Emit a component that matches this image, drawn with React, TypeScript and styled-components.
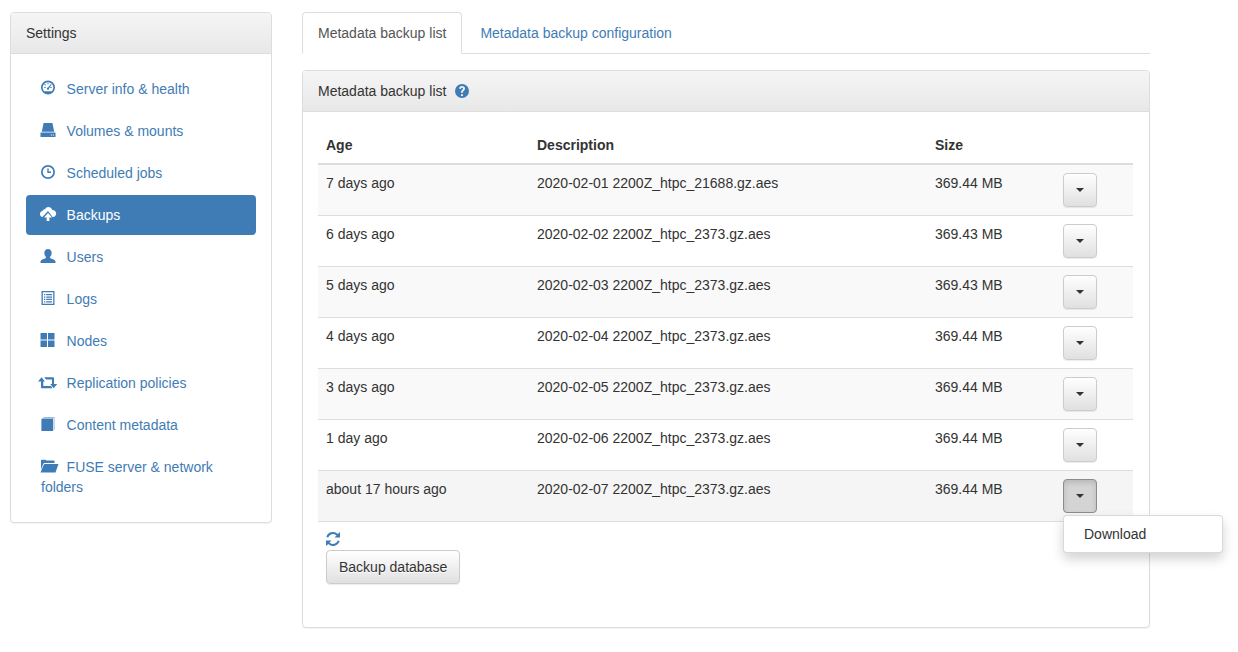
import React from "react";
import styled, { createGlobalStyle } from "styled-components";

const GlobalStyle = createGlobalStyle`
  html, body {
    margin: 0;
    padding: 0;
    background: #fff;
    color: #333;
    font-family: "Liberation Sans", Arial, sans-serif;
    font-size: 14px;
    line-height: 20px;
  }
`;

const linkBlue = "#3f7cb5";

const Page = styled.div`
  display: flex;
  align-items: flex-start;
  gap: 30px;
  padding: 12px 88px 24px 10px;
`;

const Panel = styled.section`
  border: 1px solid #ddd;
  border-radius: 4px;
  background: #fff;
  box-shadow: 0 1px 1px rgba(0, 0, 0, 0.05);
`;

const Sidebar = styled(Panel)`
  flex: 0 0 262px;
  box-sizing: border-box;
`;

const PanelHeading = styled.div`
  display: flex;
  align-items: center;
  gap: 9px;
  height: 41px;
  box-sizing: border-box;
  padding: 10px 15px;
  border-bottom: 1px solid #ddd;
  border-radius: 3px 3px 0 0;
  background: linear-gradient(to bottom, #f5f5f5, #e8e8e8);
`;

const SidebarBody = styled.div`
  padding: 15px;
`;

const Nav = styled.ul`
  list-style: none;
  margin: 0;
  padding: 0;
  display: flex;
  flex-direction: column;
  gap: 2px;
`;

const NavLink = styled.a<{ $active?: boolean }>`
  display: block;
  padding: 10px 15px;
  border-radius: 4px;
  color: ${(p) => (p.$active ? "#fff" : linkBlue)};
  background: ${(p) => (p.$active ? linkBlue : "transparent")};
  text-decoration: none;
`;

const NavIcon = styled.svg`
  display: inline-block;
  width: 14px;
  height: 14px;
  margin-right: 11.6px;
  vertical-align: -1px;
  overflow: visible;
  fill: currentColor;
`;

const Main = styled.main`
  flex: 1;
  min-width: 0;
`;

const Tabs = styled.div`
  display: flex;
  height: 42px;
  box-sizing: border-box;
  border-bottom: 1px solid #ddd;
  margin-bottom: 16px;
`;

const Tab = styled.a<{ $active?: boolean }>`
  height: 42px;
  box-sizing: border-box;
  padding: 10px 15px;
  margin-right: 2px;
  border: 1px solid ${(p) => (p.$active ? "#ddd" : "transparent")};
  border-bottom-color: ${(p) => (p.$active ? "#fff" : "transparent")};
  border-radius: 4px 4px 0 0;
  background: ${(p) => (p.$active ? "#fff" : "transparent")};
  color: ${(p) => (p.$active ? "#555" : linkBlue)};
  text-decoration: none;
`;

const ContentBody = styled.div`
  padding: 15px 16px 43px 15px;
`;

const HelpIcon = styled.svg`
  width: 14px;
  height: 14px;
  fill: ${linkBlue};
`;

const Table = styled.table`
  width: 815px;
  table-layout: fixed;
  border-collapse: collapse;
  border-spacing: 0;
`;

const Th = styled.th<{ $width: number }>`
  box-sizing: border-box;
  width: ${(p) => p.$width}px;
  padding: 8px;
  text-align: left;
  font-weight: 700;
  border-bottom: 2px solid #ddd;
`;

const Row = styled.tr<{ $hover?: boolean; $odd?: boolean }>`
  background: ${(p) => (p.$hover ? "#f5f5f5" : p.$odd ? "#f9f9f9" : "#fff")};
  border-bottom: 1px solid #ddd;
`;

const Td = styled.td`
  padding: 8px;
  vertical-align: top;
`;

const ActionCell = styled(Td)`
  position: relative;
`;

const Button = styled.button`
  display: inline-block;
  box-sizing: border-box;
  padding: 6px 12px;
  font: inherit;
  color: #333;
  border: 1px solid #ccc;
  border-radius: 4px;
  background: linear-gradient(to bottom, #fff, #e0e0e0);
  box-shadow: inset 0 1px 0 rgba(255, 255, 255, 0.15), 0 1px 1px rgba(0, 0, 0, 0.075);
  text-shadow: 0 1px 0 #fff;
`;

const CaretButton = styled(Button)<{ $open?: boolean }>`
  width: 34px;
  height: 34px;
  padding: 0;
  display: flex;
  align-items: center;
  justify-content: center;
  ${(p) =>
    p.$open
      ? `
    background: #d4d4d4;
    border-color: #8c8c8c;
    box-shadow: inset 0 3px 5px rgba(0, 0, 0, 0.125);
  `
      : ""}
`;

const Caret = styled.span`
  width: 0;
  height: 0;
  border-top: 4px solid #333;
  border-left: 4px solid transparent;
  border-right: 4px solid transparent;
`;

const Menu = styled.ul`
  position: absolute;
  top: 44px;
  left: 8px;
  z-index: 10;
  width: 160px;
  box-sizing: border-box;
  margin: 0;
  padding: 5px 0;
  list-style: none;
  background: #fff;
  border: 1px solid rgba(0, 0, 0, 0.15);
  border-radius: 4px;
  box-shadow: 0 6px 12px rgba(0, 0, 0, 0.175);
`;

const MenuItem = styled.li`
  padding: 3px 20px;
  color: #333;
`;

const RefreshIcon = styled.svg`
  display: block;
  width: 14px;
  height: 14px;
  margin: 10px 0 4px 8px;
  fill: ${linkBlue};
`;

const BackupButton = styled(Button)`
  margin-left: 8px;
`;

const icons: Record<string, React.ReactNode> = {
  dashboard: (
    <path
      fillRule="evenodd"
      d="M7 -.5a7 7 0 1 1 0 14A7 7 0 0 1 7 -.5Zm0 1.700a5.300 5.300 0 0 0-5.300 5.300c0 1.400.6 2.700 1.500 3.700h7.600c.9-1 1.500-2.300 1.500-3.700A5.300 5.300 0 0 0 7 1.200Zm-.5.700h1v1.400h-1ZM3.300 6h1.400v1H3.300Zm6 0h1.400v1H9.300Zm.6-3 .7.5L8 7.400a1.100 1.100 0 1 1-1-.8ZM3.900 3l1 1-.7.7-1-1Z"
    />
  ),
  hdd: (
    <path
      fillRule="evenodd"
      d="M2.600 0h8.800l1.800 8.700H.8ZM-.2 9.500h14.400c.2 0 .3.100.3.300v4c0 .1-.1.200-.3.200H-.2c-.2 0-.3-.1-.3-.2v-4c0-.2.100-.3.300-.3Zm10 1.900v1h1.100v-1Zm2 0v1h1.100v-1Z"
    />
  ),
  time: (
    <path
      fillRule="evenodd"
      d="M7 0a7 7 0 1 1 0 14A7 7 0 0 1 7 0Zm0 1.700a5.300 5.300 0 1 0 0 10.600A5.300 5.300 0 0 0 7 1.700ZM6.300 3.500h1.400v3.100H10V8H6.300Z"
    />
  ),
  cloud: (
    <path d="M7.200 0c1.900 0 3.500 1.200 4.100 2.900 2.100 0 3.900 1.600 3.900 3.600 0 1.900-1.500 3.400-3.300 3.400h-.3L7 4 1.400 9.900H1C-.2 9.600-1 8.500-1 7c0-1.500 1.100-2.700 2.500-2.900C2 2.900 3 2.200 4.100 2.300 4.800.9 5.900 0 7.200 0ZM7 6l4 4.400H8.400V14H5.600v-3.600H3Z" />
  ),
  user: (
    <path d="M7 0c2.300 0 3.700 1.700 3.700 4 0 1.600-.7 3-1.700 3.900 0 .9.200 1.300 1 1.600 2 .7 4.200 1.200 4.500 3.100V14H-.5v-1.400c.3-1.900 2.500-2.400 4.500-3.100.8-.3 1-.7 1-1.600C4 7 3.300 5.600 3.300 4 3.300 1.700 4.700 0 7 0Z" />
  ),
  list: (
    <path
      fillRule="evenodd"
      d="M.5 0h13v14H.5Zm1.300 1.300v11.400h10.400V1.300ZM3 3h1.300v1.300H3Zm2.200 0H11v1.300H5.200ZM3 5.400h1.300v1.300H3Zm2.200 0H11v1.300H5.200ZM3 7.800h1.300v1.300H3Zm2.200 0H11v1.300H5.200Zm-2.200 2.400h1.300v1.300H3Zm2.200 0H11v1.300H5.200Z"
    />
  ),
  grid: <path d="M-.5 0h6.500v6.500H-.5Zm7.500 0h6.500v6.500H7ZM-.5 7.500h6.500V14H-.5Zm7.500 0h6.500V14H7Z" />,
  retweet: (
    <path d="M.5 2.300 4 6.500H2.300V11H10l1.500 2.300H1c-.7 0-1-.3-1-1V6.500H-3ZM3.200 2.300h8.600c.8 0 1.200.4 1.200 1.200V9h3.200l-3.500 4.300L9.200 9H11V4.500H5Z" />
  ),
  book: (
    <>
      <path d="M1.800 1.500h10.300V14H.4V2.900c0-.8.600-1.400 1.400-1.400Z" />
      <path d="M2.500.1h11.100V13h-.9V1H2.500Z" fillOpacity={0.5} />
    </>
  ),
  folder: (
    <path d="M0 1.700c0-.6.400-1 1-1h3.300c.5 0 .8.200 1 .8h7.400c.5 0 .8.300.8.800V4H3.700c-.7 0-1.200.4-1.500 1.100L0 10.500ZM4 5h13.500l-3 8.500H-.5l3-7.300C2.800 5.400 3.300 5 4 5Z" />
  ),
};

const links = [
  { label: "Server info & health", icon: "dashboard" },
  { label: "Volumes & mounts", icon: "hdd" },
  { label: "Scheduled jobs", icon: "time" },
  { label: "Backups", icon: "cloud", active: true },
  { label: "Users", icon: "user" },
  { label: "Logs", icon: "list" },
  { label: "Nodes", icon: "grid" },
  { label: "Replication policies", icon: "retweet" },
  { label: "Content metadata", icon: "book" },
  { label: "FUSE server & network folders", icon: "folder" },
];

const backups = [
  { age: "7 days ago", name: "2020-02-01 2200Z_htpc_21688.gz.aes", size: "369.44 MB" },
  { age: "6 days ago", name: "2020-02-02 2200Z_htpc_2373.gz.aes", size: "369.43 MB" },
  { age: "5 days ago", name: "2020-02-03 2200Z_htpc_2373.gz.aes", size: "369.43 MB" },
  { age: "4 days ago", name: "2020-02-04 2200Z_htpc_2373.gz.aes", size: "369.44 MB" },
  { age: "3 days ago", name: "2020-02-05 2200Z_htpc_2373.gz.aes", size: "369.44 MB" },
  { age: "1 day ago", name: "2020-02-06 2200Z_htpc_2373.gz.aes", size: "369.44 MB" },
  { age: "about 17 hours ago", name: "2020-02-07 2200Z_htpc_2373.gz.aes", size: "369.44 MB" },
];

export default function App() {
  return (
    <>
      <GlobalStyle />
      <Page>
        <Sidebar>
          <PanelHeading>Settings</PanelHeading>
          <SidebarBody>
            <Nav>
              {links.map((link) => (
                <li key={link.label}>
                  <NavLink $active={link.active}>
                    <NavIcon viewBox="0 0 14 14">{icons[link.icon]}</NavIcon>
                    {link.label}
                  </NavLink>
                </li>
              ))}
            </Nav>
          </SidebarBody>
        </Sidebar>
        <Main>
          <Tabs>
            <Tab $active>Metadata backup list</Tab>
            <Tab>Metadata backup configuration</Tab>
          </Tabs>
          <Panel>
            <PanelHeading>
              Metadata backup list
              <HelpIcon viewBox="0 0 14 14">
                <path
                  fillRule="evenodd"
                  d="M7 0a7 7 0 1 1 0 14A7 7 0 0 1 7 0Zm-1 10.200v1.800h2v-1.800ZM7 2C5.300 2 4.200 3 4 4.600l1.900.3c.1-.8.500-1.200 1.100-1.200.6 0 1 .4 1 .9 0 .5-.3.800-.9 1.300-.8.600-1.100 1.200-1.100 2.200v.6h1.900v-.4c0-.6.200-.9.800-1.300.9-.7 1.300-1.400 1.300-2.400C10 3 8.800 2 7 2Z"
                />
              </HelpIcon>
            </PanelHeading>
            <ContentBody>
              <Table>
                <thead>
                  <tr>
                    <Th $width={211}>Age</Th>
                    <Th $width={398}>Description</Th>
                    <Th $width={128}>Size</Th>
                    <Th $width={78} />
                  </tr>
                </thead>
                <tbody>
                  {backups.map((b, i) => {
                    const open = i === backups.length - 1;
                    return (
                      <Row key={b.name} $odd={i % 2 === 0} $hover={open}>
                        <Td>{b.age}</Td>
                        <Td>{b.name}</Td>
                        <Td>{b.size}</Td>
                        <ActionCell>
                          <CaretButton $open={open}>
                            <Caret />
                          </CaretButton>
                          {open && (
                            <Menu>
                              <MenuItem>Download</MenuItem>
                            </Menu>
                          )}
                        </ActionCell>
                      </Row>
                    );
                  })}
                </tbody>
              </Table>
              <RefreshIcon viewBox="0 0 14 14">
                <path d="M7 0c1.900 0 3.600.8 4.800 2L14 0v5.500H8.500l2-2A4.900 4.900 0 0 0 2.300 5.600L.3 5A7 7 0 0 1 7 0ZM0 8.500h5.500l-2 2a4.900 4.900 0 0 0 8.200-2.100l2 .6A7 7 0 0 1 2.200 12L0 14Z" />
              </RefreshIcon>
              <BackupButton>Backup database</BackupButton>
            </ContentBody>
          </Panel>
        </Main>
      </Page>
    </>
  );
}
